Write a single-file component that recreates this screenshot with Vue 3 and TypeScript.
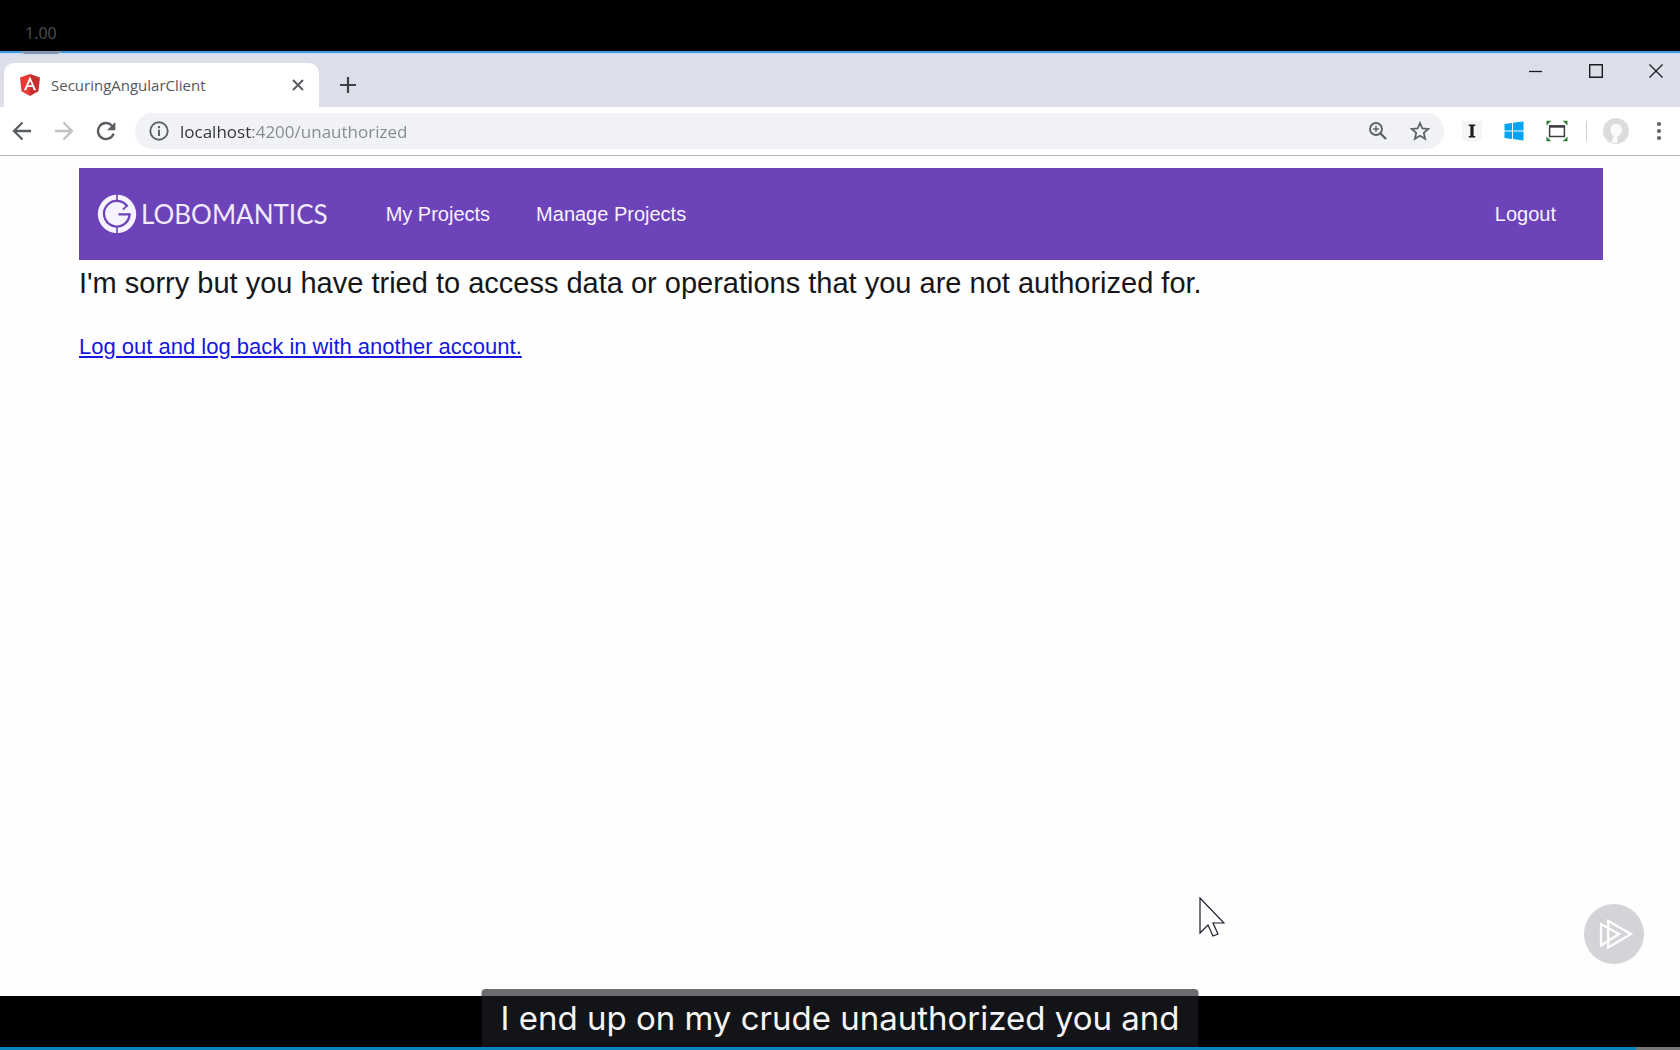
<script setup lang="ts">
import { ref } from 'vue'

interface NavLink {
  label: string
  href: string
}

const playbackRate = ref<string>('1.00')
const tabTitle = ref<string>('SecuringAngularClient')
const address = ref<string>('localhost:4200/unauthorized')
const caption = ref<string>('I end up on my crude unauthorized you and')
const progress = ref<number>(97.4)

const navLinks: NavLink[] = [
  { label: 'My Projects', href: '#projects' },
  { label: 'Manage Projects', href: '#manage' },
]
</script>

<template>
  <div class="player">
    <div class="top-bar">
      <span class="rate">{{ playbackRate }}</span>
    </div>

    <div class="browser">
      <header class="tab-strip">
        <div class="tab">
          <svg class="angular" viewBox="0 0 20 22" width="20" height="22" aria-hidden="true">
            <path d="M10 0 0 3.6l1.5 13.6L10 22z" fill="#e53935" />
            <path d="M10 0l10 3.6-1.500 13.600L10 22z" fill="#c62f2f" />
            <path d="M10 2.600 3.900 16.200h2.300l1.200-3.100h5.200l1.200 3.100h2.300zm0 4.500 1.800 4.200H8.200z" fill="#fff" />
          </svg>
          <span class="tab-title">{{ tabTitle }}</span>
          <button class="icon-btn tab-close" type="button" aria-label="Close tab">
            <svg viewBox="0 0 12 12" width="12" height="12"><path d="M1 1l10 10M11 1 1 11" stroke="#5a5d62" stroke-width="2" /></svg>
          </button>
        </div>
        <button class="icon-btn new-tab" type="button" aria-label="New tab">
          <svg viewBox="0 0 16 16" width="16" height="16"><path d="M8 0v16M0 8h16" stroke="#3c4043" stroke-width="2.200" /></svg>
        </button>
        <div class="window-controls">
          <button class="icon-btn window-btn" type="button" aria-label="Minimize">
            <svg viewBox="0 0 14 14" width="14" height="14"><path d="M0 7.500h13" stroke="#1b1b1f" stroke-width="1.300" /></svg>
          </button>
          <button class="icon-btn window-btn" type="button" aria-label="Maximize">
            <svg viewBox="0 0 14 14" width="14" height="14"><path d="M.7.7h12.600v12.600H.7z" fill="none" stroke="#1b1b1f" stroke-width="1.400" /></svg>
          </button>
          <button class="icon-btn window-btn" type="button" aria-label="Close window">
            <svg viewBox="0 0 14 14" width="14" height="14"><path d="M.5.5l13 13M13.500.5l-13 13" stroke="#1b1b1f" stroke-width="1.300" /></svg>
          </button>
        </div>
      </header>

      <div class="toolbar">
        <div class="nav-buttons">
          <button class="icon-btn" type="button" aria-label="Back">
            <svg viewBox="0 0 20 20" width="20" height="20"><path d="M19 10H3M10.500 1.500 2 10l8.500 8.500" fill="none" stroke="#5a5d62" stroke-width="2.300" /></svg>
          </button>
          <button class="icon-btn" type="button" aria-label="Forward">
            <svg viewBox="0 0 20 20" width="20" height="20"><path d="M1 10h16M9.500 1.500 18 10l-8.500 8.500" fill="none" stroke="#bfc1c4" stroke-width="2.300" /></svg>
          </button>
          <button class="icon-btn" type="button" aria-label="Reload">
            <svg viewBox="0 0 20 20" width="20" height="20">
              <path d="M17.600 12.600A8 8 0 1 1 15.900 4.600" fill="none" stroke="#5a5d62" stroke-width="2.400" />
              <path d="M19.300 1v8.200h-8.200z" fill="#5a5d62" />
            </svg>
          </button>
        </div>

        <div class="omnibox">
          <button class="icon-btn" type="button" aria-label="Site information">
            <svg viewBox="0 0 20 20" width="20" height="20">
              <circle cx="10" cy="10" r="8.700" fill="none" stroke="#5f6368" stroke-width="1.900" />
              <path d="M10 8.800V15M10 5v2.200" stroke="#5f6368" stroke-width="2" />
            </svg>
          </button>
          <input v-model="address" class="address" type="text" aria-label="Address" spellcheck="false" />
          <button class="icon-btn" type="button" aria-label="Zoom">
            <svg viewBox="0 0 20 20" width="20" height="20">
              <circle cx="8" cy="8" r="6" fill="none" stroke="#5f6368" stroke-width="1.900" />
              <path d="M12.500 12.500 18 18" stroke="#5f6368" stroke-width="2.400" />
              <path d="M8 5v6M5 8h6" stroke="#5f6368" stroke-width="1.400" />
            </svg>
          </button>
          <button class="icon-btn star" type="button" aria-label="Bookmark this page">
            <svg viewBox="0 0 20 20" width="20" height="20">
              <path d="M10 2l2.400 5.500 6 .5-4.600 3.900 1.400 5.900L10 14.700l-5.200 3.100 1.400-5.900L1.600 8l6-.5z" fill="none" stroke="#5f6368" stroke-width="1.800" />
            </svg>
          </button>
        </div>

        <div class="extensions">
          <button class="icon-btn" type="button" aria-label="Instapaper">
            <svg viewBox="0 0 20 20" width="20" height="20">
              <path d="M0 0h20v20H0z" fill="#f5f5f5" />
              <path d="M6.700 3.500h6.600v1.300l-1.700.4v9.600l1.700.4v1.300H6.700v-1.300l1.700-.4V5.200l-1.700-.4z" fill="#1d1d1d" />
            </svg>
          </button>
          <button class="icon-btn" type="button" aria-label="Windows">
            <svg viewBox="0 0 20 20" width="20" height="20">
              <path d="M.5 3 8 2v7.400H.5zM9 1.800 19.500.5v8.900H9zM.5 10.400H8V18L.5 17zM9 10.400h10.500v9.100L9 18.100z" fill="#00a4f4" />
            </svg>
          </button>
          <button class="icon-btn" type="button" aria-label="Screen capture">
            <svg viewBox="0 0 22 22" width="22" height="22">
              <path d="M3.600 6h14.800v10.500H3.600z" fill="none" stroke="#3c4043" stroke-width="1.500" />
              <path d="M3 6.500h16" stroke="#3c4043" stroke-width="2.400" />
              <path d="M.5.8h4.800L.5 5.600zM21.500.8h-4.800l4.800 4.800zM.5 21.200h4.800L.5 16.400zM21.500 21.200h-4.800l4.800-4.800z" fill="#2f7d32" />
            </svg>
          </button>
        </div>
        <span class="divider"></span>
        <button class="icon-btn" type="button" aria-label="Profile">
          <svg viewBox="0 0 26 26" width="26" height="26">
            <circle cx="13" cy="13" r="13" fill="#dcdcdd" />
            <path d="M13.500 6c-4 0-6 2.600-6 6 0 2.800 1.200 4.900 3 5.800 0 2.200-.8 4-2.300 6.200 2 .9 4.300 1.100 6.300.8V18c2.900-.7 4.500-3 4.500-6 0-3.400-1.800-6-5.500-6z" fill="#fafafa" />
          </svg>
        </button>
        <button class="icon-btn menu" type="button" aria-label="Menu">
          <svg viewBox="0 0 6 20" width="6" height="20" fill="#5f6368"><circle cx="3" cy="3" r="2.100" /><circle cx="3" cy="10" r="2.100" /><circle cx="3" cy="17" r="2.100" /></svg>
        </button>
      </div>

      <main class="page">
        <nav class="navbar">
          <a class="brand" href="#home">
            <svg viewBox="0 0 40 40" width="40" height="40" aria-hidden="true">
              <circle cx="20" cy="20" r="19.200" fill="#f7f2ff" />
              <path d="M20 0v8M20 32v8" stroke="#6c43b9" stroke-width="1.600" />
              <path d="M30.500 12.600A12.800 12.800 0 1 0 32.600 20.400H21.500" fill="none" stroke="#6c43b9" stroke-width="2.300" />
              <path d="M30.500 10.800 26 15.600" stroke="#6c43b9" stroke-width="1.800" />
            </svg>
            <span class="brand-name">LOBOMANTICS</span>
          </a>
          <a v-for="link in navLinks" :key="link.href" class="nav-link" :href="link.href">{{ link.label }}</a>
          <a class="nav-link logout" href="#logout">Logout</a>
        </nav>
        <h1 class="message">I'm sorry but you have tried to access data or operations that you are not authorized for.</h1>
        <p class="action"><a href="#logout">Log out and log back in with another account.</a></p>
      </main>

      <svg class="cursor" viewBox="0 0 26 40" width="26" height="40" aria-hidden="true">
        <path d="M1 1v35l8-8 5 11 5-2-5-11h11z" fill="#fff" stroke="#1d1a2b" stroke-width="1.200" />
      </svg>
      <svg class="watermark" viewBox="0 0 60 60" width="60" height="60" aria-hidden="true">
        <circle cx="30" cy="30" r="30" fill="#d5d3d7" />
        <path d="M24.200 17v26.500L47 30zM17 20v21.500L35 30z" fill="none" stroke="#fff" stroke-width="2.200" />
      </svg>
    </div>

    <div class="bottom-bar">
      <progress class="progress" :value="progress" max="100" aria-label="Playback progress"></progress>
      <p class="caption">{{ caption }}</p>
    </div>
  </div>
</template>

<style>
body {
  margin: 0;
  background: #000;
}
</style>

<style scoped>
.player {
  display: flex;
  flex-direction: column;
  min-height: 100vh;
  background: #000;
  font-family: "Open Sans", "Noto Sans", sans-serif;
}

.top-bar {
  position: relative;
  z-index: 1;
  display: flex;
  align-items: flex-end;
  height: 51px;
  padding-left: 20px;
}

.rate {
  box-sizing: border-box;
  width: 42px;
  height: 42px;
  margin-bottom: -3px;
  padding: 9px 0 0 5px;
  border-radius: 5px;
  background: linear-gradient(#000 39px, #8296b0 39px);
  color: #4a4a4a;
  font-family: "Noto Sans", sans-serif;
  font-size: 16px;
  line-height: 24px;
}

.browser {
  position: relative;
  display: flex;
  flex: 1;
  flex-direction: column;
  background: #fefefe;
}

.icon-btn {
  display: flex;
  flex: none;
  align-items: center;
  justify-content: center;
  padding: 0;
  border: 0;
  background: none;
}

.tab-strip {
  display: flex;
  align-items: flex-end;
  height: 54px;
  border-top: 2px solid #3d97dc;
  background: linear-gradient(#c6e0f5 1px, #dcdee9 2px);
  padding: 0 0 0 4px;
}

.tab {
  display: flex;
  box-sizing: border-box;
  align-items: center;
  width: 315px;
  height: 44px;
  padding: 0 15px 0 16px;
  border-radius: 10px 10px 0 0;
  background: #fff;
}

.tab-title {
  flex: 1;
  margin-left: 11px;
  color: #55585d;
  font-size: 15px;
  line-height: 20px;
}

.new-tab {
  width: 28px;
  height: 44px;
  margin-left: 15px;
}

.window-controls {
  display: flex;
  align-self: flex-start;
  gap: 12px;
  margin-left: auto;
}

.window-btn {
  width: 48px;
  height: 36px;
}

.toolbar {
  display: flex;
  box-sizing: border-box;
  align-items: center;
  height: 49px;
  padding: 0 18px 0 12px;
  border-bottom: 1px solid #b4b5b8;
  background: #fff;
}

.nav-buttons {
  display: flex;
  gap: 22px;
}

.omnibox {
  display: flex;
  flex: 1;
  box-sizing: border-box;
  align-items: center;
  height: 36px;
  margin: 0 18px 0 19px;
  padding: 0 14px;
  border-radius: 18px;
  background: #f1f2f5;
}

.address {
  flex: 1;
  min-width: 0;
  height: 28px;
  margin-left: 11px;
  padding: 0;
  border: 0;
  outline: 0;
  background: linear-gradient(90deg, #303236 73px, #85888e 73px);
  background-clip: text;
  color: #5f6368;
  -webkit-text-fill-color: transparent;
  font-family: "Open Sans", sans-serif;
  font-size: 17px;
}

.star {
  margin-left: 22px;
}

.extensions {
  display: flex;
  gap: 22px;
}

.divider {
  width: 1px;
  height: 20px;
  margin: 0 16px 0 18px;
  background: #cfd0d3;
}

.menu {
  margin-left: 27px;
}

.page {
  padding: 12px 77px 40px 79px;
  font-family: "Liberation Sans", Arial, sans-serif;
}

.navbar {
  display: flex;
  align-items: center;
  height: 92px;
  padding: 0 47px 0 18px;
  background: #6c43b9;
}

.brand {
  display: flex;
  align-items: center;
  gap: 4px;
  margin-right: 12px;
  color: #f1eafc;
  text-decoration: none;
}

.brand-name {
  font-family: Lato, sans-serif;
  font-size: 26px;
  line-height: 32px;
}

.nav-link {
  margin-left: 46px;
  color: #f7f2ff;
  font-size: 20px;
  line-height: 24px;
  text-decoration: none;
}

.logout {
  margin-left: auto;
}

.message {
  margin: 5px 0 0;
  color: #16161a;
  font-size: 29px;
  font-weight: 400;
  line-height: 36px;
}

.action {
  margin: 32px 0 0;
  font-size: 22px;
  line-height: 28px;
}

.action a {
  color: #1717e0;
}

.cursor {
  position: absolute;
  right: 455px;
  bottom: 59px;
}

.watermark {
  position: absolute;
  right: 36px;
  bottom: 32px;
}

.bottom-bar {
  position: relative;
  display: flex;
  align-items: flex-end;
  height: 54px;
}

.progress {
  width: 100%;
  height: 3px;
  border: 0;
  appearance: none;
  background: #777;
}

.progress::-webkit-progress-bar {
  background: #777;
}

.progress::-webkit-progress-value {
  background: #0a84bd;
}

.caption {
  position: absolute;
  bottom: 3px;
  left: 50%;
  box-sizing: border-box;
  height: 58px;
  margin: 0;
  padding: 7px 19px;
  border-radius: 4px 4px 0 0;
  background: rgb(27 31 37 / 0.65);
  color: #f5f5f5;
  font-family: Inter, sans-serif;
  font-size: 33px;
  line-height: 44px;
  white-space: nowrap;
  transform: translateX(-50%);
}
</style>
